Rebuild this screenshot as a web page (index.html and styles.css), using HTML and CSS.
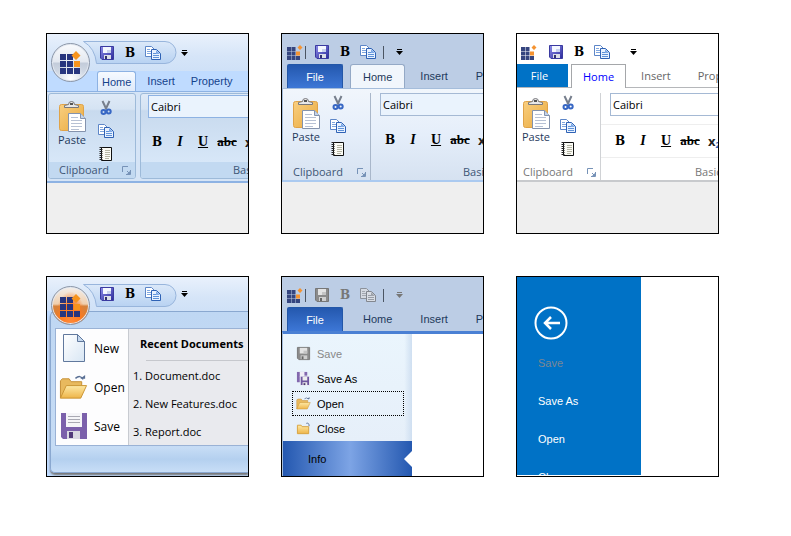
FILE: index.html
```html
<!DOCTYPE html>
<html lang="en">
<head>
<meta charset="utf-8">
<meta name="viewport" content="width=device-width, initial-scale=1">
<title>Ribbon themes</title>
<link rel="stylesheet" href="styles.css">
</head>
<body>
<svg class="sprite" aria-hidden="true">
  <defs>
    <linearGradient id="g-save" x1="0" y1="0" x2="1" y2="1"><stop offset="0" stop-color="#8e8de8"/><stop offset="1" stop-color="#2a2a9c"/></linearGradient>
    <linearGradient id="g-pill" x1="0" y1="0" x2="0" y2="1"><stop offset="0" stop-color="#dce9f9"/><stop offset="1" stop-color="#b8d2f2"/></linearGradient>
    <linearGradient id="g-board" x1="0" y1="0" x2="1" y2="1"><stop offset="0" stop-color="#f9cf80"/><stop offset="1" stop-color="#e9a93d"/></linearGradient>
    <linearGradient id="g-folder" x1="0" y1="0" x2="0" y2="1"><stop offset="0" stop-color="#fde8a4"/><stop offset="1" stop-color="#eeb54a"/></linearGradient>
    <linearGradient id="g-page" x1="0" y1="0" x2="1" y2="1"><stop offset="0" stop-color="#ffffff"/><stop offset="1" stop-color="#d8e6f4"/></linearGradient>
  </defs>
  <symbol id="logo" viewBox="0 0 21 24">
    <path fill="#27357e" d="M0 3h6v6H0zM7 3h6v6H7zM0 10h6v6H0zM7 10h6v6H7zM0 17h6v6H0zM7 17h6v6H7zM14 17h6v6h-6z"/>
    <path fill="#f7941d" d="M14 10h6v6h-6zM16 0l4.500 4.500-4.500 4.500-4.500-4.500z"/>
  </symbol>
  <symbol id="logo-sm" viewBox="0 0 16 16">
    <path fill="#35457f" d="M0 3h4v4H0zM4.500 3h4v4h-4zM0 7.500h4v4H0zM4.500 7.500h4v4h-4zM0 12h4v4H0zM4.500 12h4v4h-4zM9 12h4v4H9z"/>
    <path fill="#f59331" d="M9 7.500h4v4H9zM13 1l2.500 2.500L13 6l-2.500-2.500z"/>
  </symbol>
  <symbol id="save" viewBox="0 0 16 16">
    <path fill="url(#g-save)" stroke="#3a3aa0" d="M1.500 1.500h13v13H3l-1.500-1.500z"/>
    <path fill="#f4f7ff" d="M4 2h8v6H4z"/><path fill="#c9d2ee" d="M8 5h4v3H8z"/>
    <path fill="#dcdfe8" d="M5 10h7v4H5z"/><path fill="#30306e" d="M6 11h2v3H6z"/>
  </symbol>
  <symbol id="save-gray" viewBox="0 0 16 16">
    <path fill="#8b8b8b" stroke="#777" d="M1.500 1.500h13v13H3l-1.500-1.500z"/>
    <path fill="#e3e3e3" d="M4 2h8v6H4z"/><path fill="#c4c4c4" d="M8 5h4v3H8z"/>
    <path fill="#cfcfcf" d="M5 10h7v4H5z"/><path fill="#666" d="M6 11h2v3H6z"/>
  </symbol>
  <symbol id="copy" viewBox="0 0 16 16">
    <path fill="#fff" stroke="#5d86c8" d="M.5 1.500h6l3 3v7h-9z"/><path stroke="#7fa6df" d="M2 4.500h3M2 6.500h4M2 8.500h4"/>
    <path fill="#e9f2ff" stroke="#2f62b5" d="M6.500 4.500h5l4 4v6h-9z"/><path fill="#7ea9e6" d="M11 5v4h4z"/><path stroke="#5f92d8" d="M8 8.500h3M8 10.500h6M8 12.500h6"/>
  </symbol>
  <symbol id="copy-gray" viewBox="0 0 16 16">
    <path fill="#d5dae2" stroke="#8c929b" d="M.5 1.500h6l3 3v7h-9z"/><path stroke="#a3a8b0" d="M2 4.500h3M2 6.500h4M2 8.500h4"/>
    <path fill="#d9dde4" stroke="#82878f" d="M6.500 4.500h5l4 4v6h-9z"/><path fill="#9ea3ab" d="M11 5v4h4z"/><path stroke="#989ea7" d="M8 8.500h3M8 10.500h6M8 12.500h6"/>
  </symbol>
  <symbol id="caret" viewBox="0 0 7 6"><path fill="currentColor" d="M1 0h5v1H1zM0 2h7L3.500 6z"/></symbol>
  <symbol id="paste" viewBox="0 0 27 31">
    <rect x=".5" y="3.500" width="24" height="26" rx="2" fill="url(#g-board)" stroke="#e0a348"/>
    <path fill="#e8e8e8" stroke="#77777c" d="M5.500 6.500v-2l4-1q0-3 3-3t3 3l4 1v2z"/><path fill="#555" d="M11 2h3v2h-3z"/>
    <path fill="#fff" stroke="#8493ad" d="M9.500 12.500h12l5 5v13h-17z"/><path fill="#c4d3e8" stroke="#8493ad" d="M21.500 12.500v5h5"/>
    <path stroke="#b7c1d4" d="M12 16.500h7M12 19.500h11M12 22.500h11M12 25.500h11M12 28.500h8"/>
  </symbol>
  <symbol id="cut" viewBox="0 0 12 16">
    <path fill="none" stroke="#777f8d" stroke-width="2" d="M2.500 1l4 8.500M9.500 1L5.500 9.500"/>
    <circle cx="3.500" cy="12" r="2" fill="none" stroke="#3767c4" stroke-width="2"/><circle cx="8.700" cy="11.500" r="2" fill="none" stroke="#3767c4" stroke-width="2"/>
  </symbol>
  <symbol id="note" viewBox="0 0 14 16">
    <path fill="#fbfbf5" stroke="#111" d="M2.500 1.500h10v13h-10z"/><path stroke="#b5b5a4" d="M6 4.500h5M6 6.500h5M6 8.500h5M6 10.500h5M6 12.500h4"/>
    <path stroke="#222" stroke-width="3" stroke-dasharray="1 1" d="M2 1v14"/>
  </symbol>
  <symbol id="launch" viewBox="0 0 9 9"><path fill="none" stroke="currentColor" d="M.5 6V.5H6M5 5l3 3M8.500 4v4.500H4"/><path fill="currentColor" d="M8 5v3H5z"/></symbol>
  <symbol id="new-doc" viewBox="-3 0 29 29"><path fill="url(#g-page)" stroke="#60789d" d="M1.500.5h14l7 7v20h-21z"/><path fill="#c5d8ee" stroke="#60789d" d="M15.500.5v7h7z"/></symbol>
  <symbol id="folder" viewBox="0 0 30 25">
    <path fill="#e8b95e" stroke="#c58e34" d="M1.500 23.500v-18l2-2h7l2 3h11v5"/><path fill="url(#g-folder)" stroke="#ca9434" d="M1.500 23.500l6-13h21l-6 13z"/>
    <path fill="none" stroke="#596f94" stroke-width="1.500" d="M17 3q5-4 8 1"/><path fill="#596f94" d="M22 3.500h5v-4z"/>
  </symbol>
  <symbol id="floppy" viewBox="-2 -1 29 29">
    <path fill="#7b60ab" d="M0 0h26v26H2l-2-2z"/><path fill="#f5f5f8" d="M5 0h16v14H5z"/><path stroke="#a9a9b3" d="M7 3.500h12M7 6.500h12M7 9.500h12"/>
    <path fill="#d9d9e2" d="M6 18h13v8H6z"/><path fill="#513b7a" d="M8 19h4v6H8z"/>
  </symbol>
  <symbol id="save-as" viewBox="0 0 16 16">
    <path fill="#8268ae" d="M1 1h11v11H1z"/><path fill="#f0edf6" d="M4 1h5v5H4z"/>
    <path fill="#6f569f" stroke="#f2f5fb" d="M4.500 5.500h10v10h-10z"/><path fill="#eee" d="M7 6h5v4H7zM7 12h5v3H7z"/><path fill="#49366c" d="M8 13h2v2H8z"/>
  </symbol>
  <symbol id="folder-closed" viewBox="0 0 16 16"><path fill="url(#g-folder)" stroke="#d7a23f" d="M1.500 13.500v-9h4l1 1.500h7v7.500z"/><path fill="none" stroke="#596f94" d="M11 2.500q3-1 3 3"/></symbol>
  <symbol id="back" viewBox="0 0 34 34"><g fill="none" stroke="#fff"><circle cx="17" cy="17" r="15.500" stroke-width="2"/><path stroke-width="2.500" d="M26 17H11M17 11l-6 6 6 6"/></g></symbol>
</svg>

<main class="gallery">
  <section class="frame luna" aria-label="Blue ribbon">
    <button class="orb" aria-label="Application menu"><svg><use href="#logo"/></svg></button>
    <div class="qat">
      <svg class="pill" viewBox="0 0 94 23" aria-hidden="true"><path fill="url(#g-pill)" stroke="#98b5dc" d="M.5.500H82a11 11 0 0 1 0 22H13.500Q12 7 .5.500z"/></svg>
      <button aria-label="Save"><svg><use href="#save"/></svg></button>
      <button class="bold">B</button>
      <button aria-label="Copy"><svg><use href="#copy"/></svg></button>
      <button class="more" aria-label="More"><svg><use href="#caret"/></svg></button>
    </div>
    <nav class="tabs"><button class="tab active">Home</button><button class="tab">Insert</button><button class="tab">Property</button></nav>
    <div class="ribbon">
      <div class="group clipboard">
        <div class="tools">
          <button class="paste"><svg><use href="#paste"/></svg>Paste</button>
          <div class="stack"><button aria-label="Cut"><svg><use href="#cut"/></svg></button><button aria-label="Copy"><svg><use href="#copy"/></svg></button><button aria-label="Notes"><svg><use href="#note"/></svg></button></div>
        </div>
        <div class="caption">Clipboard<button class="launch" aria-label="Clipboard options"><svg><use href="#launch"/></svg></button></div>
      </div>
      <div class="group font">
        <div class="tools"><input type="text" value="Caibri" aria-label="Font">
          <div class="styles"><button class="bold">B</button><button class="italic">I</button><button class="under">U</button><button class="strike">abc</button><button class="sub">x<sub>2</sub></button></div></div>
        <div class="caption">Basic</div>
      </div>
    </div>
  </section>

  <section class="frame silver" aria-label="Silver ribbon">
    <div class="qat">
      <svg class="brand" aria-hidden="true"><use href="#logo-sm"/></svg><span class="bar"></span>
      <button aria-label="Save"><svg><use href="#save"/></svg></button>
      <button class="bold">B</button>
      <button aria-label="Copy"><svg><use href="#copy"/></svg></button><span class="bar"></span>
      <button class="more" aria-label="More"><svg><use href="#caret"/></svg></button>
    </div>
    <nav class="tabs"><button class="tab file">File</button><button class="tab active">Home</button><button class="tab">Insert</button><button class="tab">Property</button></nav>
    <div class="ribbon">
      <div class="group clipboard">
        <div class="tools">
          <button class="paste"><svg><use href="#paste"/></svg>Paste</button>
          <div class="stack"><button aria-label="Cut"><svg><use href="#cut"/></svg></button><button aria-label="Copy"><svg><use href="#copy"/></svg></button><button aria-label="Notes"><svg><use href="#note"/></svg></button></div>
        </div>
        <div class="caption">Clipboard<button class="launch" aria-label="Clipboard options"><svg><use href="#launch"/></svg></button></div>
      </div>
      <div class="group font">
        <div class="tools"><input type="text" value="Caibri" aria-label="Font">
          <div class="styles"><button class="bold">B</button><button class="italic">I</button><button class="under">U</button><button class="strike">abc</button><button class="sub">x<sub>2</sub></button></div></div>
        <div class="caption">Basic</div>
      </div>
    </div>
  </section>

  <section class="frame white" aria-label="White ribbon">
    <div class="qat">
      <svg class="brand" aria-hidden="true"><use href="#logo-sm"/></svg><span class="bar"></span>
      <button aria-label="Save"><svg><use href="#save"/></svg></button>
      <button class="bold">B</button>
      <button aria-label="Copy"><svg><use href="#copy"/></svg></button><span class="bar"></span>
      <button class="more" aria-label="More"><svg><use href="#caret"/></svg></button>
    </div>
    <nav class="tabs"><button class="tab file">File</button><button class="tab active">Home</button><button class="tab">Insert</button><button class="tab">Property</button></nav>
    <div class="ribbon">
      <div class="group clipboard">
        <div class="tools">
          <button class="paste"><svg><use href="#paste"/></svg>Paste</button>
          <div class="stack"><button aria-label="Cut"><svg><use href="#cut"/></svg></button><button aria-label="Copy"><svg><use href="#copy"/></svg></button><button aria-label="Notes"><svg><use href="#note"/></svg></button></div>
        </div>
        <div class="caption">Clipboard<button class="launch" aria-label="Clipboard options"><svg><use href="#launch"/></svg></button></div>
      </div>
      <div class="group font">
        <div class="tools"><input type="text" value="Caibri" aria-label="Font">
          <div class="styles"><button class="bold">B</button><button class="italic">I</button><button class="under">U</button><button class="strike">abc</button><button class="sub">x<sub>2</sub></button></div></div>
        <div class="caption">Basic</div>
      </div>
    </div>
  </section>

  <section class="frame luna open" aria-label="Application menu">
    <button class="orb" aria-label="Application menu"><svg><use href="#logo"/></svg></button>
    <div class="qat">
      <svg class="pill" viewBox="0 0 94 23" aria-hidden="true"><path fill="url(#g-pill)" stroke="#98b5dc" d="M.5.500H82a11 11 0 0 1 0 22H13.500Q12 7 .5.500z"/></svg>
      <button aria-label="Save"><svg><use href="#save"/></svg></button>
      <button class="bold">B</button>
      <button aria-label="Copy"><svg><use href="#copy"/></svg></button>
      <button class="more" aria-label="More"><svg><use href="#caret"/></svg></button>
    </div>
    <div class="appmenu">
      <div class="panes">
        <div class="commands">
          <button><svg><use href="#new-doc"/></svg>New</button>
          <button><svg><use href="#folder"/></svg>Open</button>
          <button><svg><use href="#floppy"/></svg>Save</button>
        </div>
        <div class="recent">
          <h2>Recent Documents</h2>
          <hr>
          <a href="#">1. Document.doc</a><a href="#">2. New Features.doc</a><a href="#">3. Report.doc</a>
        </div>
      </div>
    </div>
  </section>

  <section class="frame silver backstage" aria-label="Silver backstage">
    <div class="qat">
      <svg class="brand" aria-hidden="true"><use href="#logo-sm"/></svg><span class="bar"></span>
      <button disabled aria-label="Save"><svg><use href="#save-gray"/></svg></button>
      <button disabled class="bold">B</button>
      <button disabled aria-label="Copy"><svg><use href="#copy-gray"/></svg></button><span class="bar"></span>
      <button disabled class="more" aria-label="More"><svg><use href="#caret"/></svg></button>
    </div>
    <nav class="tabs"><button class="tab file">File</button><button class="tab">Home</button><button class="tab">Insert</button><button class="tab">Property</button></nav>
    <div class="stage">
      <div class="side">
        <div class="list">
          <button disabled><svg><use href="#save-gray"/></svg>Save</button>
          <button><svg><use href="#save-as"/></svg>Save As</button>
          <button class="focused"><svg><use href="#folder"/></svg>Open</button>
          <button><svg><use href="#folder-closed"/></svg>Close</button>
        </div>
        <button class="info">Info</button>
      </div>
    </div>
  </section>

  <section class="frame metro" aria-label="Blue backstage">
    <div class="side">
      <button class="back" aria-label="Back"><svg><use href="#back"/></svg></button>
      <button disabled>Save</button><button>Save As</button><button>Open</button><button>Close</button>
    </div>
  </section>
</main>
</body>
</html>
```
FILE: styles.css
```css
* { box-sizing: border-box; }
body { margin: 0; background: #fff; color: #000; font: 12px/16px "Open Sans", "Noto Sans", sans-serif; }
.sprite { position: absolute; width: 0; height: 0; }
button, input { margin: 0; padding: 0; border: 0; background: none; color: inherit; font: inherit; }
button { display: flex; align-items: center; flex: none; white-space: nowrap; }
svg { display: block; flex: none; }

.gallery { display: grid; grid-template-columns: repeat(3, minmax(0, 1fr)); grid-auto-rows: 201px; gap: 42px 32px; padding: 33px 72px 33px 46px; }
.frame { position: relative; display: flex; flex-direction: column; min-height: 0; border: 1px solid #000; background: #efefef; overflow: hidden; }

/* quick access toolbar */
.qat { position: relative; display: flex; align-items: center; gap: 7px; flex: none; height: 30px; padding: 6px 0 0 5px; }
.qat button { width: 16px; height: 16px; justify-content: center; }
.qat button svg { width: 16px; height: 16px; }
.qat .more svg { width: 7px; height: 6px; }
.qat .brand { width: 16px; height: 16px; }
.bold, .italic, .under, .strike { font-family: "Liberation Serif", serif; font-weight: bold; font-size: 14px; color: #000; }
.bold { font-family: "DejaVu Serif", serif; font-size: 12px; }
.bar { width: 1px; height: 13px; background: #4b5563; }
.qat .brand + .bar { margin: 0 1px 0 -5px; }

/* tabs */
.tabs { display: flex; flex: none; height: 24px; font-family: "Liberation Sans", Arial, sans-serif; font-size: 11px; }
.tab { justify-content: center; color: #1e395b; }

/* ribbon */
.ribbon { display: flex; flex: none; height: 94px; overflow: hidden; }
.group { display: flex; flex-direction: column; flex: none; }
.clipboard { width: 88px; }
.font { width: 210px; }
.tools { flex: 1; display: flex; min-height: 0; }
.paste { flex-direction: column; align-self: flex-start; width: 32px; font-size: 11px; color: #1e395b; }
.paste svg { width: 27px; height: 31px; }
.stack { display: flex; flex-direction: column; gap: 7px; margin-left: 8px; }
.stack button { width: 16px; height: 16px; justify-content: center; }
.stack svg { width: 16px; height: 16px; }
.font .tools { flex-direction: column; }
.font input { flex: none; width: 190px; height: 23px; margin-left: 9px; padding: 0 2px; border: 1px solid #a5b9d4; background: #eaf3fd; font-size: 11px; color: #000; }
.styles { display: flex; gap: 7px; margin: 16px 0 0 11px; }
.styles button { width: 16px; height: 16px; justify-content: center; }
.italic { font-style: italic; }
.under { text-decoration: underline; }
.styles .strike { width: 18px; font-size: 13px; text-decoration: line-through; }
.styles .sub { font-size: 13px; font-weight: bold; color: #222; }
.sub sub { align-self: flex-end; font-size: 8px; line-height: 8px; color: #2a62b8; }
.caption { display: flex; align-items: center; height: 16px; padding-left: 10px; font-size: 11px; color: #3e5675; }
.launch { margin-left: auto; margin-right: 4px; color: #7692b7; }
.launch svg { width: 9px; height: 9px; }
.font .caption { padding-left: 92px; }

/* blue theme */
.luna .qat { height: 37px; padding: 0 0 0 52px; background: linear-gradient(#e9f1fc, #d6e5f8 60%, #cfe1f7); }
.luna .qat button { position: relative; }
.luna .qat .more { margin-left: 8px; }
.pill { position: absolute; left: 36px; top: 7px; width: 94px; height: 23px; }
.orb { position: absolute; z-index: 1; left: 4px; top: 9px; width: 39px; height: 39px; justify-content: center; border: 1px solid #8b96a8; border-radius: 50%; background: radial-gradient(ellipse at 50% 100%, #fff 0, rgba(255, 255, 255, 0) 50%), linear-gradient(#fafbfd 0, #e3e8f0 48%, #c3ccda 52%, #dde4ee 100%); box-shadow: inset 0 0 0 1px #e4e9f1; }
.orb svg { width: 21px; height: 24px; }
.luna .tabs { height: 20px; padding-left: 50px; background: #bfdbff; }
.luna .tab { padding: 0 5px; margin-right: 6px; color: #15428b; }
.luna .tab.active { padding: 0 4px; border: 1px solid #8db2e3; border-bottom: 0; border-radius: 3px 3px 0 0; background: linear-gradient(#f6faff, #dfeafa); }
.luna .ribbon { gap: 4px; height: 92px; padding: 1px 0 2px 1px; background: #d5e4f6; border-top: 1px solid #8db2e3; border-bottom: 2px solid #8db2e3; }
.luna .group { border: 1px solid #9dbad9; border-radius: 3px; background: linear-gradient(#dfeaf7 0, #d5e3f3 18%, #c8daee 20%, #dcebfb 100%); overflow: hidden; }
.luna .clipboard .tools { padding: 7px 0 0 7px; }
.luna .font .tools { padding-top: 1px; }
.luna .font input { margin-left: 7px; border-color: #8db2e3; }
.luna .styles { margin-left: 8px; }
.luna .caption { background: #c2d9f1; }
.luna .stack { margin-top: -1px; margin-left: 10px; }

/* silver theme */
.silver { background: #efefef; }
.silver .qat, .silver .tabs { background: #bccde5; }
.silver .tabs { padding-left: 5px; }
.silver .file { width: 56px; margin-right: 7px; background: linear-gradient(#2458ae, #3d77d6); color: #fff; border: 1px solid #2357a8; border-bottom: 0; border-radius: 2px 2px 0 0; }
.silver .tab:not(.file) { padding: 0 13px; margin-right: 2px; }
.silver .tab.active { padding: 0 12px; background: #f1f6fc; border: 1px solid #94a9c6; border-bottom: 0; border-radius: 3px 3px 0 0; }
.silver .ribbon, .white .ribbon { padding: 4px 0 0; }
.silver .ribbon { border: 1px solid #a5bddb; border-right: 0; border-bottom: 2px solid #abcaf0; background: linear-gradient(#f1f6fc, #e5eefa 50%, #d6e2f1); }
.silver .clipboard, .white .clipboard { border-right: 1px solid #a9b7ca; }
.silver .clipboard .tools, .white .clipboard .tools { padding: 5px 0 0 7px; }
.silver .stack, .white .stack { margin-top: -3px; }

/* white theme */
.white .qat, .white .ribbon { background: #fff; }
.white .qat { padding-left: 4px; }
.white .bar { background: transparent; }
.white .tabs { background: #fff; border-bottom: 1px solid #b5b7ba; font-family: inherit; }
.white .tab:not(.file) { padding: 0 12px; margin-right: 3px; color: #666; }
.white .tab.file { width: 51px; margin-right: 3px; padding-right: 6px; background: #0072c6; color: #fff; }
.white .tab.active { height: 24px; padding: 0 11px; border: 1px solid #a5a7aa; border-bottom: 0; background: #fff; color: #00f; }
.white .ribbon { padding-top: 5px; border-bottom: 2px solid #c8cacd; }
.white .clipboard { width: 84px; border-color: #d0d2d5; }
.white .clipboard .tools { padding-left: 3px; }
.white .caption { padding-left: 6px; color: #777; }
.white .font .caption { padding-left: 94px; }
.white input { background: #fff; }
.white .styles { margin: 8px 0 0; padding: 8px 0 8px 11px; border: solid #eee; border-width: 1px 0; }

/* application menu */
.open { background: #bfdbff; }
.open .orb { background: radial-gradient(ellipse at 50% 100%, #ff8a3a 0, #ff7a1f 35%, rgba(255, 122, 31, 0) 62%), linear-gradient(#f3efec 0, #f0cfae 46%, #d5823c 52%, #ee7a24 100%); }
.open .qat { height: 34px; }
.appmenu { flex: 1; min-height: 0; margin: 0 0 3px 3px; padding: 16px 0 26px 4px; border: 1px solid #8aa8d0; border-right: 0; border-radius: 5px 0 0 5px; background: linear-gradient(#bfd7f3, #c6dcf5 85%, #b4d0ef 92%, #c8def7); box-shadow: 0 2px 2px #777; }
.panes { display: flex; height: 100%; border: 1px solid #9ab2d5; border-right: 0; background: #e9eaee; overflow: hidden; }
.commands { flex: none; width: 73px; padding: 0 3px; background: #fdfdfe; border-right: 1px solid #c8cbd1; }
.commands button { gap: 6px; width: 100%; height: 39px; }
.commands svg { width: 29px; height: 29px; }
.recent { flex: 1; min-width: 0; white-space: nowrap; font-size: 11px; }
.recent h2 { margin: 0; padding: 7px 0 8px 11px; font-size: 11px; line-height: 16px; }
.recent hr { margin: 0 0 1px 17px; border: 0; border-top: 1px solid #c6c8cd; }
.recent a { display: block; padding-left: 4px; color: #000; text-decoration: none; line-height: 28px; }

/* silver backstage */
.backstage .bold:disabled, .backstage .more:disabled { color: #777; }
.stage { flex: 1; display: flex; min-height: 0; border-top: 3px solid #4a80d4; border-left: 1px solid #a5bddb; background: #fff; }
.side { font-family: "Liberation Sans", Arial, sans-serif; font-size: 11px; }
.silver .side { display: flex; flex-direction: column; width: 129px; }
.list { flex: none; padding: 7px 8px 0 9px; background: linear-gradient(90deg, transparent 94%, #cfdff1), linear-gradient(#eaf5fd, #e6eff9); }
.list button { width: 100%; height: 25px; gap: 6px; padding-left: 3px; border: 1px solid transparent; }
.list button:disabled { color: #888; }
.list .focused { border: 1px dotted #000; }
.list svg { width: 15px; height: 15px; }
.info { position: relative; flex: 1; width: 100%; padding-left: 25px; background: linear-gradient(90deg, #2458b0, #7da4e5 52%, #2458b0); }
.info::after { content: ""; position: absolute; right: 0; top: 50%; margin-top: -8px; border: 8px solid transparent; border-left: 0; border-right-color: #fff; }

/* blue backstage */
.metro { background: #fff; }
.metro .side { flex: 1; width: 124px; min-height: 0; margin-bottom: 1px; padding: 27px 0 0 17px; background: #0072c6; color: #fff; overflow: hidden; }
.metro .side button { height: 38px; padding-left: 4px; }
.metro .side button:disabled { color: #7d8793; }
.metro .side .back { margin-bottom: 2px; padding: 0; }
.back svg { width: 34px; height: 34px; }
```
